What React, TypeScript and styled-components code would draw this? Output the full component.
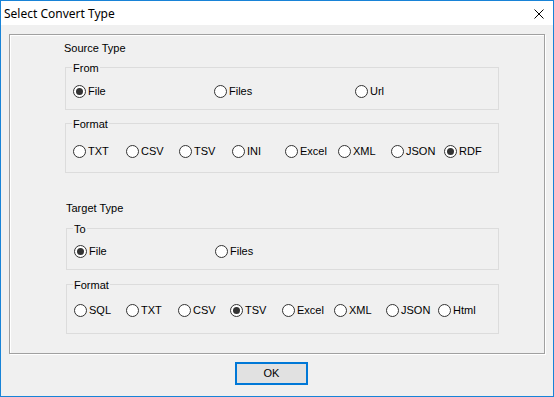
import React from "react";
import styled, { createGlobalStyle } from "styled-components";

const GlobalStyle = createGlobalStyle`
  html, body { margin: 0; padding: 0; background: #f0f0f0; }
  * { box-sizing: border-box; }
`;

const Window = styled.div`
  width: 554px;
  height: 397px;
  border: 1px solid #1883d7;
  background: #f0f0f0;
  display: flex;
  flex-direction: column;
  font-family: "Liberation Sans", Arial, sans-serif;
  font-size: 11px;
  color: #000;
`;

const TitleBar = styled.div`
  height: 24px;
  background: #fff;
  display: flex;
  align-items: center;
  justify-content: space-between;
  padding: 0 9px 0 3px;
`;

const TitleText = styled.span`
  font-family: "Noto Sans", "Open Sans", sans-serif;
  font-size: 12px;
  line-height: 16px;
  margin-top: 1px;
`;

const CloseIcon = styled.svg`
  width: 10px;
  height: 10px;
  display: block;
  margin-top: 1px;
`;

const Client = styled.div`
  flex: 1;
  display: flex;
  flex-direction: column;
  padding: 9px 8px 0 8px;
`;

const Panel = styled.div`
  width: 536px;
  height: 320px;
  border: 1px solid #a0a0a0;
  box-shadow: inset 1px 1px 0 #fff, 1px 1px 0 #fff;
  padding: 7px 0 0 54px;
  display: flex;
  flex-direction: column;
`;

const SectionLabel = styled.div<{ $indent: number; $gap: number }>`
  line-height: 13px;
  height: 13px;
  margin-left: ${(p) => p.$indent}px;
  margin-top: ${(p) => p.$gap}px;
`;

const Group = styled.div<{
  $indent: number;
  $gap: number;
  $height: number;
  $padTop: number;
}>`
  position: relative;
  width: ${(p) => 434 - p.$indent}px;
  height: ${(p) => p.$height}px;
  margin-left: ${(p) => 1 + p.$indent}px;
  margin-top: ${(p) => p.$gap}px;
  border: 1px solid #dcdcdc;
  padding: ${(p) => p.$padTop}px 0 0 7px;
  display: flex;
  align-items: flex-start;
`;

const Caption = styled.span`
  position: absolute;
  top: -6px;
  left: 6px;
  padding: 0 1px;
  background: #f0f0f0;
  line-height: 13px;
`;

const RadioItem = styled.label<{ $width: number }>`
  width: ${(p) => p.$width}px;
  flex: none;
  height: 13px;
  display: flex;
  align-items: center;
`;

const Circle = styled.span<{ $checked: boolean }>`
  position: relative;
  width: 13px;
  height: 13px;
  flex: none;
  border-radius: 50%;
  border: 1px solid #333;
  background: #fff;
  &::after {
    content: "";
    display: ${(p) => (p.$checked ? "block" : "none")};
    position: absolute;
    left: 2px;
    top: 2px;
    width: 7px;
    height: 7px;
    border-radius: 50%;
    background: #333;
  }
`;

const RadioText = styled.span`
  margin-left: 2px;
  line-height: 13px;
  white-space: nowrap;
`;

const Footer = styled.div`
  display: flex;
  padding: 8px 0 0 226px;
`;

const OkButton = styled.button`
  width: 73px;
  height: 23px;
  border: 2px solid #0078d7;
  background: #e1e1e1;
  font-family: "Liberation Sans", Arial, sans-serif;
  font-size: 11px;
  color: #000;
  padding: 0;
  line-height: 17px;
`;

type RadioProps = { label: string; checked?: boolean; width: number };

function Radio({ label, checked = false, width }: RadioProps) {
  return (
    <RadioItem $width={width}>
      <Circle $checked={checked} />
      <RadioText>{label}</RadioText>
    </RadioItem>
  );
}

type GroupBoxProps = {
  caption: string;
  options: string[];
  selected: string;
  step: number;
  indent: number;
  gap: number;
  height: number;
  padTop: number;
};

function GroupBox({ caption, options, selected, step, indent, gap, height, padTop }: GroupBoxProps) {
  return (
    <Group $indent={indent} $gap={gap} $height={height} $padTop={padTop}>
      <Caption>{caption}</Caption>
      {options.map((o) => (
        <Radio key={o} label={o} checked={o === selected} width={step} />
      ))}
    </Group>
  );
}

export default function App() {
  return (
    <>
      <GlobalStyle />
      <Window>
        <TitleBar>
          <TitleText>Select Convert Type</TitleText>
          <CloseIcon viewBox="0 0 10 10">
            <path d="M0.5 0.5 L9.5 9.5 M9.5 0.5 L0.5 9.5" stroke="#000" strokeWidth="1" fill="none" />
          </CloseIcon>
        </TitleBar>
        <Client>
          <Panel>
            <SectionLabel $indent={0} $gap={0}>Source Type</SectionLabel>
            <GroupBox
              caption="From"
              options={["File", "Files", "Url"]}
              selected="File"
              step={141}
              indent={0}
              gap={12}
              height={43}
              padTop={17}
            />
            <GroupBox
              caption="Format"
              options={["TXT", "CSV", "TSV", "INI", "Excel", "XML", "JSON", "RDF"]}
              selected="RDF"
              step={53}
              indent={0}
              gap={13}
              height={50}
              padTop={21}
            />
            <SectionLabel $indent={2} $gap={29}>Target Type</SectionLabel>
            <GroupBox
              caption="To"
              options={["File", "Files"]}
              selected="File"
              step={141}
              indent={1}
              gap={13}
              height={42}
              padTop={16}
            />
            <GroupBox
              caption="Format"
              options={["SQL", "TXT", "CSV", "TSV", "Excel", "XML", "JSON", "Html"]}
              selected="TSV"
              step={52}
              indent={1}
              gap={14}
              height={50}
              padTop={19}
            />
          </Panel>
          <Footer>
            <OkButton>OK</OkButton>
          </Footer>
        </Client>
      </Window>
    </>
  );
}
